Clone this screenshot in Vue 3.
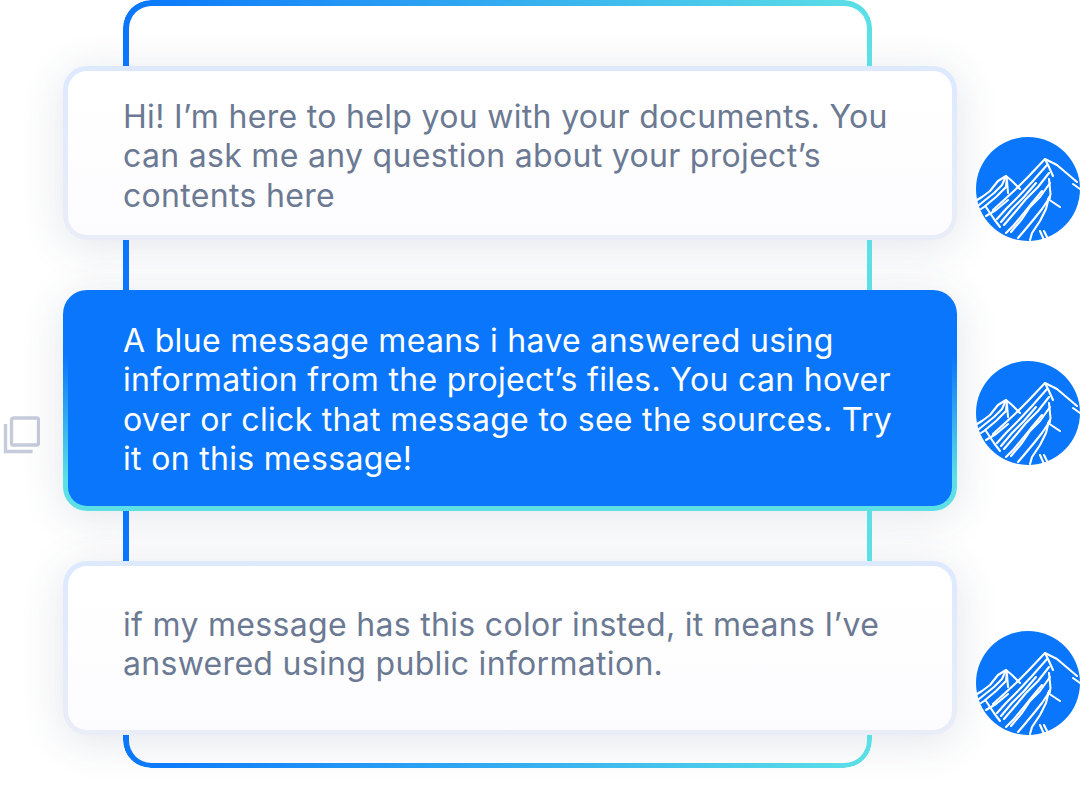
<template>
  <div class="page">
    <!-- gradient frame behind the messages -->
    <div class="frame"></div>

    <div class="thread">
      <div v-for="msg in messages" :key="msg.id" class="row">
        <div class="tool-col">
          <svg v-if="msg.sourced" class="copy-icon" width="37" height="38" viewBox="0 0 37 38" fill="none" stroke="#c5cbdb" stroke-width="3.4">
            <rect x="8.5" y="2" width="27" height="27" rx="2" />
            <path d="M2.5 8v27.5h27" />
          </svg>
        </div>

        <div class="card-wrap">
          <div class="card" :class="msg.kind">
            <p class="card-text">
              <span v-for="line in msg.lines" :key="line" class="line">{{ line }}</span>
            </p>
          </div>
        </div>

        <div class="avatar" :class="msg.kind">
          <svg width="104" height="104" viewBox="0 0 104 104" fill="none" stroke="#fff" stroke-width="2.1" stroke-linecap="round" stroke-linejoin="round">
            <circle cx="52" cy="52" r="52" fill="#0a76fb" stroke="none" />
            <!-- ridge lines -->
            <path d="M69 22L81 28 101 45" />
            <path d="M97 47l7 5" />
            <path d="M69 22l3 6 5 11" />
            <path d="M73 42l1.5 15-1 5" />
            <path d="M72 62l12 8" />
            <!-- hatching of the big peak -->
            <path d="M69 22L52 40 40 52 28 63 17 73" />
            <path d="M71 28L56 45 42 60 30 72 21 82" />
            <path d="M73 36L62 50 50 62 40 74 28 88" />
            <path d="M74 46L64 60 54 70 46 82 35 95" />
            <path d="M74 60L66 72 58 82 48 94 42 101" />
            <path d="M73 60L70 72 64 84 56 96 54 103" />
            <path d="M60 46L48 60 36 72 25 85" />
            <path d="M66 54L56 66 48 76 38 88 30 96" />
            <!-- small peak -->
            <path d="M30 39L22 44 14 54 6 60 1 63" />
            <path d="M30 39L26 48 18 56 8 64 3 68" />
            <path d="M31 40L30 50 20 60 8 70 5 72" />
            <path d="M30 39l6 5 8 8" />
            <path d="M31 44l1 12" />
            <path d="M32 63L20 73 10 79" />
            <path d="M10 70l8 12 6 8" />
            <path d="M64 94l4 9M68 94l4 8" />
          </svg>
        </div>
      </div>
    </div>
  </div>
</template>

<script setup>
const messages = [
  {
    id: 1,
    kind: 'intro',
    sourced: false,
    lines: [
      'Hi! I’m here to help you with your documents. You',
      'can ask me any question about your project’s',
      'contents here'
    ]
  },
  {
    id: 2,
    kind: 'blue',
    sourced: true,
    lines: [
      'A blue message means i have answered using',
      'information from the project’s files. You can hover',
      'over or click that message to see the sources. Try',
      'it on this message!'
    ]
  },
  {
    id: 3,
    kind: 'outro',
    sourced: false,
    lines: [
      'if my message has this color insted, it means I’ve',
      'answered using public information.'
    ]
  }
]
</script>

<style>
html, body {
  margin: 0;
  background: #fff;
}
</style>

<style scoped>
.page {
  position: relative;
  width: 1080px;
  height: 802px;
  overflow: hidden;
  background: #fff;
  font-family: Inter, "Liberation Sans", sans-serif;
  isolation: isolate;
}

.frame {
  position: absolute;
  top: 0;
  left: 123px;
  width: 749px;
  height: 768px;
  box-sizing: border-box;
  padding: 5.5px;
  border-radius: 28px;
  background: linear-gradient(90deg, #0a76fb 0%, #5ce0e6 100%);
  -webkit-mask: linear-gradient(#000 0 0) content-box, linear-gradient(#000 0 0);
  mask: linear-gradient(#000 0 0) content-box, linear-gradient(#000 0 0);
  -webkit-mask-composite: xor;
  mask-composite: exclude;
  z-index: 1;
}

.thread {
  display: flex;
  flex-direction: column;
  gap: 50px;
  padding-top: 66px;
}

.row {
  display: grid;
  grid-template-columns: 63px 894px 104px;
}

.tool-col {
  display: flex;
  align-items: flex-start;
}

.copy-icon {
  display: block;
  margin: 126px 0 0 3px;
}

.card-wrap {
  position: relative;
}

/* the soft shadow sits below the frame, the card above it */
.card-wrap::before {
  content: '';
  position: absolute;
  inset: 0;
  border-radius: 24px;
  box-shadow: 0 6px 44px rgba(60, 70, 105, 0.14);
  z-index: 0;
}

.card {
  position: relative;
  z-index: 2;
  box-sizing: border-box;
  border: 5px solid transparent;
  border-radius: 24px;
  padding-left: 55px;
  background:
    linear-gradient(#fff, #fcfcfe) padding-box,
    linear-gradient(180deg, #dde9ff, #e9edf7) border-box;
}

.card.intro {
  height: 174px;
  padding-top: 26px;
}

.card.blue {
  height: 221px;
  padding-top: 26px;
  background:
    linear-gradient(#0a76fb, #0a76fb) padding-box,
    linear-gradient(180deg, #0a76fb 30%, #5ce0e6 85%) border-box;
}

.card.outro {
  height: 174px;
  padding-top: 39px;
}

.card-text {
  margin: 0;
  font-size: 32px;
  line-height: 39.4px;
  letter-spacing: 0.31px;
  color: #6b7993;
}

.card.blue .card-text {
  color: #fff;
}

.line {
  display: block;
  white-space: nowrap;
}

.avatar {
  margin: 71px 0 -1px 19px;
  width: 104px;
  height: 104px;
  z-index: 2;
}

.avatar.outro {
  margin-top: 70px;
  margin-bottom: 0;
}

.avatar svg {
  display: block;
}
</style>
